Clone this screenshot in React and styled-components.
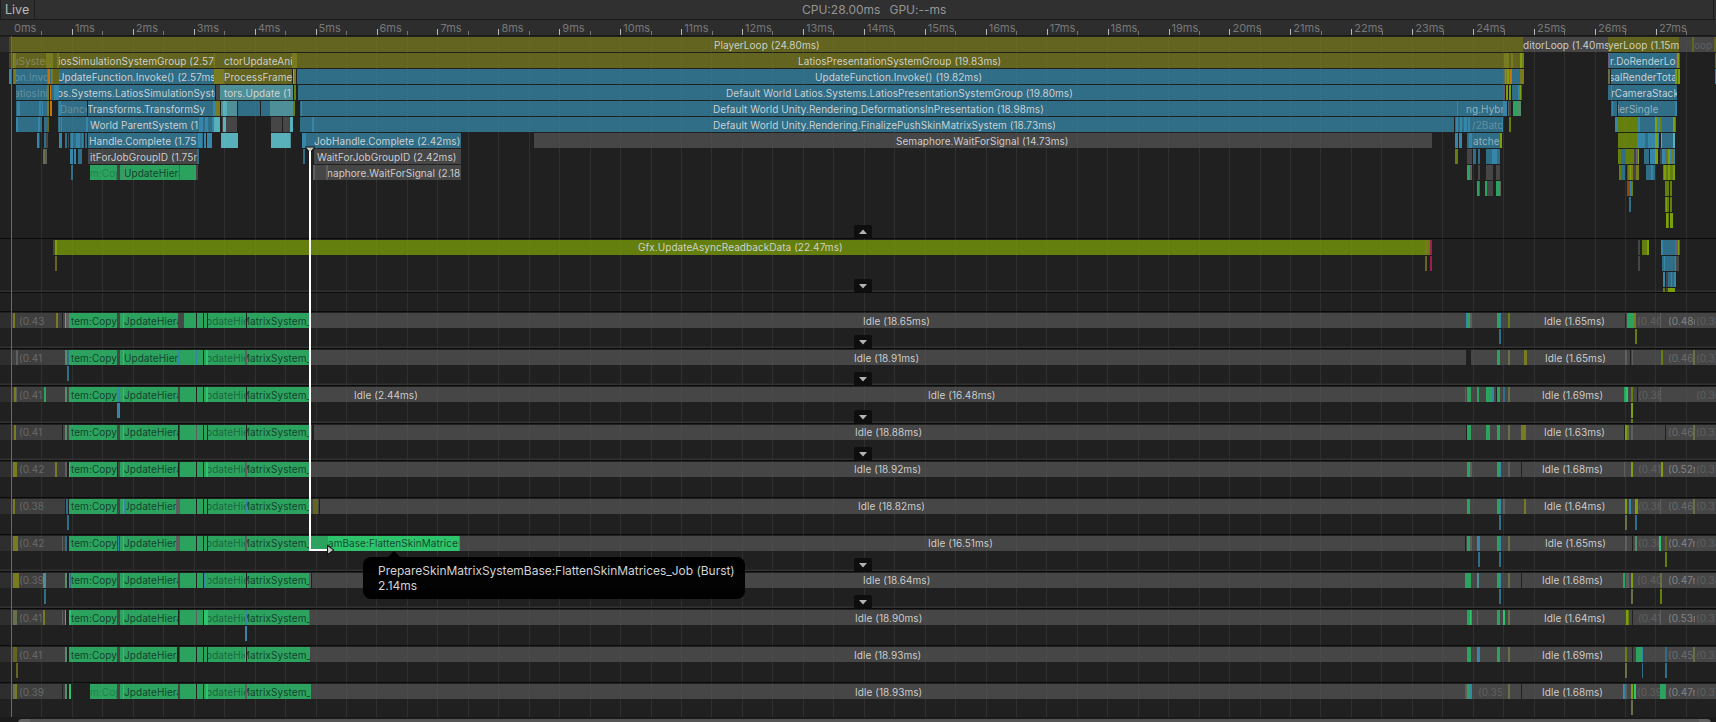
import React from "react";
import styled, { createGlobalStyle } from "styled-components";

const C = {
  o: "#62641f", O: "#787b1f", d: "#4a4b22", b: "#306d86", B: "#3586a8", t: "#4f8f97", T: "#58b1ba",
  g: "#464646", G: "#5e5e5e", h: "#2e2e2e", j: "#3f3f3f", n: "#2ca25f", N: "#2dc46c", M: "#558c6c",
  l: "#647f0e", L: "#7c9f0b", r: "#c8740c", R: "#93440f", p: "#6a5a7c", m: "#a01c4c", x: "#202020", q: "#66714a",
};
const INK = {
  w: "rgba(222,222,222,.9)", f: "rgba(200,210,210,.36)", s: "rgba(215,220,220,.62)",
  k: "rgba(12,40,28,.8)", z: "rgba(14,60,36,.6)", e: "rgba(14,60,36,.35)", v: "rgba(160,160,160,.3)",
  u: "rgba(175,175,175,.6)", y: "rgba(165,165,165,.42)",
};

const Page = createGlobalStyle`
  * { box-sizing: border-box; }
  body { margin: 0; background: #202020; overflow: hidden; }
`;
const Profiler = styled.main`
  position: relative;
  width: 1716px;
  height: 722px;
  overflow: hidden;
  display: flex;
  flex-direction: column;
  background: #202020;
  font-family: Inter, "Liberation Sans", sans-serif;
  font-size: 11px;
`;
const Toolbar = styled.header`
  display: grid;
  grid-template-columns: 35px 1fr 3px;
  height: 20px;
  flex: none;
  background: #303030;
  border-bottom: 1px solid #1b1b1b;
  font-size: 12px;
  line-height: 19px;
  color: #a8a8a8;
`;
const LiveButton = styled.div`
  border-left: 1px solid #1e1e1e;
  border-right: 1px solid #1e1e1e;
  padding-left: 4px;
  font-size: 12.5px;
  color: #b8b8b8;
`;
const Stats = styled.div`
  display: flex;
  gap: 9px;
  padding-left: 767px;
  color: #959595;
  white-space: pre;
`;
const ToolbarEnd = styled.div`
  border-left: 1px solid #1b1b1b;
`;
const Ruler = styled.div`
  display: flex;
  align-items: flex-end;
  flex: none;
  height: 16px;
  padding-left: 11px;
  background: #2d2d2d;
  border-bottom: 1px solid #191919;
  overflow: hidden;
`;
const Tick = styled.div`
  display: flex;
  flex: 0 0 60.93px;
  position: relative;
  height: 15px;
  padding-left: 3px;
  line-height: 17px;
  font-size: 11px;
  color: #777;
  &::before, &::after {
    content: "";
    position: absolute;
    bottom: 0;
    left: 0;
    width: 1px;
    height: 6px;
    background: ${(p) => (p.$first ? "transparent" : "#b8b8b8")};
  }
  &::after { left: 30.4px; height: 4px; background: #777; }
`;
const Tracks = styled.div`
  display: flex;
  flex-direction: column;
  position: relative;
  flex: none;
  overflow: hidden;
`;
const Grid = styled.div`
  position: absolute;
  inset: 0;
  display: flex;
  padding-left: 11px;
  z-index: ${(p) => (p.$front ? 2 : 0)};
  pointer-events: none;
`;
const GridLine = styled.div`
  flex: 0 0 30.466px;
  border-left: 1px solid ${(p) => (p.$front ? "rgba(255,255,255,.025)" : "rgba(255,255,255,.055)")};
  &:first-child { border-left-color: #6a6a6a; }
`;
const Track = styled.section`
  position: relative;
  flex: none;
  height: ${(p) => p.$h}px;
  padding-top: 1px;
  overflow: hidden;
  line-height: ${(p) => (p.$high ? 15 : 17)}px;
  border-bottom: 1px solid ${(p) => (p.$last ? "transparent" : "#0b0b0b")};
  box-shadow: ${(p) => (p.$more ? "inset 0 -1px #323232, inset 0 -2px #282828" : "none")};
`;
const Lane = styled.div`
  display: flex;
  height: 15px;
  margin-bottom: 1px;
  position: relative;
  z-index: 1;
`;
const Bar = styled.div`
  flex: none;
  width: ${(p) => p.$w}px;
  margin-left: ${(p) => p.$gap}px;
  background: ${(p) => C[p.$c]};
  overflow: hidden;
`;
const Label = styled.span`
  display: block;
  margin-left: ${(p) => p.$x}px;
  font-size: 10px;
  letter-spacing: .06px;
  white-space: pre;
  color: ${(p) => INK[p.$ink]};
`;
const Toggle = styled.button`
  position: absolute;
  z-index: 3;
  left: 854px;
  bottom: 0;
  width: 18px;
  height: 13px;
  padding: ${(p) => (p.$up ? 0 : 1)}px 0 0;
  border: 0;
  border-radius: 2px 2px 0 0;
  background: #0e0e0e;
  display: flex;
  align-items: center;
  justify-content: center;
`;
const Scroll = styled.div`
  flex: none;
  height: 5px;
  background: #1b1b1b;
  padding: 2px 5px 0 18px;
  overflow: hidden;
`;
const Thumb = styled.div`
  height: 8px;
  background: #555;
  border-radius: 4px;
  border: solid #626262;
  border-width: 0 12px;
`;
const Flow = styled.svg`
  position: absolute;
  z-index: 4;
  left: 300px;
  top: 140px;
`;
const Tooltip = styled.div`
  position: absolute;
  z-index: 5;
  left: 363px;
  top: 557px;
  width: 382px;
  height: 42px;
  padding: 6px 15px;
  border-radius: 8px;
  background: rgba(0, 0, 0, .96);
  color: #d2d2d2;
  font-size: 12px;
  letter-spacing: -.03px;
  line-height: 15px;
  white-space: pre;
  &::before {
    content: "";
    position: absolute;
    left: 25px;
    top: -6px;
    border: solid transparent;
    border-width: 0 6px 6px;
    border-bottom-color: #000;
  }
`;

// Bars are [start, end, colour, label, label start, label ink].
const mainLanes = [
  [[0, 9, "h"], [9, 11, "d"], [11, 1523, "o", "PlayerLoop (24.80ms)", 714, "w"], [1523, 1608, "g", "ditorLoop (1.40ms)", 1523, "w"], [1608, 1679, "o", "yerLoop (1.15ms", 1608, "w"], [1679, 1716, "g", "oop (", 1694, "v"], [1692, 1694, "o"], [1714, 1716, "o"]],
  [[9, 11, "d"], [11, 13, "o"], [13, 14, "t"], [14, 16, "O"], [16, 46, "o", "ıSyster", 16, "f"], [46, 53, "O"], [53, 57, "o"], [57, 60, "O"], [59, 215, "o", "iosSimulationSystemGroup (2.57ms)", 58, "w"], [214, 215, "O"], [215, 224, "o"], [224, 292, "o", "ctorUpdateAni", 224, "w"], [292, 297, "O"], [297, 1504, "o", "LatiosPresentationSystemGroup (19.83ms)", 798, "w"], [1504, 1509, "O"], [1509, 1511, "o"], [1511, 1513, "O"], [1513, 1520, "o"], [1520, 1522, "L"], [1522, 1524, "O"], [1608, 1609, "p"], [1609, 1610, "q"], [1610, 1676, "b", "r.DoRenderLo", 1610, "w"], [1676, 1677, "p"], [1677, 1679, "L"], [1679, 1680, "o"], [1715, 1716, "o"]],
  [[9, 11, "B"], [11, 13, "x"], [13, 14, "q"], [14, 16, "O"], [16, 47, "b", "on.Invo", 14, "f"], [47, 48, "O"], [48, 50, "r"], [50, 51, "b"], [51, 53, "O"], [53, 59, "o"], [59, 214, "b", "UpdateFunction.Invoke() (2.57ms", 57, "w"], [214, 224, "O"], [224, 292, "o", "ProcessFrame", 224, "w"], [293, 294, "T"], [294, 296, "O"], [297, 1504, "b", "UpdateFunction.Invoke() (19.82ms)", 815, "w"], [1504, 1505, "q"], [1505, 1506, "L"], [1506, 1507, "O"], [1507, 1509, "L"], [1509, 1510, "O"], [1510, 1512, "r"], [1512, 1520, "b"], [1520, 1524, "O"], [1608, 1610, "q"], [1611, 1675, "b", "salRenderTota", 1609, "w"], [1675, 1677, "L"], [1677, 1678, "o"], [1678, 1680, "L"], [1715, 1716, "B"]],
  [[16, 47, "b", "atiosInit", 14, "f"], [47, 49, "O"], [50, 51, "r"], [51, 54, "b"], [54, 59, "B"], [59, 215, "b", "os.Systems.LatiosSimulationSyste", 57, "w"], [216, 220, "g"], [220, 293, "t", "tors.Update (1", 224, "w"], [294, 296, "l"], [298, 1504, "b", "Default World Latios.Systems.LatiosPresentationSystemGroup (19.80ms)", 726, "w"], [1504, 1505, "p"], [1506, 1508, "L"], [1509, 1511, "L"], [1512, 1518, "b"], [1518, 1520, "B"], [1520, 1521, "L"], [1521, 1522, "o"], [1608, 1677, "b", "rCameraStack", 1611, "w"], [1611, 1612, "B"]],
  [[16, 47, "b"], [17, 20, "B"], [39, 41, "B"], [42, 43, "B"], [47, 49, "O"], [50, 52, "r"], [58, 87, "b", "Dance", 60, "f"], [59, 61, "B"], [88, 215, "b", "Transforms.TransformSy", 87, "w"], [213, 215, "B"], [215, 220, "O"], [221, 223, "t"], [223, 227, "T"], [227, 237, "t"], [238, 260, "b"], [261, 270, "b"], [270, 293, "t"], [293, 295, "l"], [300, 1467, "b", "Default World Unity.Rendering.DeformationsInPresentation (18.98ms)", 713, "w"], [301, 302, "B"], [1457, 1458, "B"], [1466, 1503, "b", "ng.Hybr", 1466, "s"], [1503, 1507, "B"], [1508, 1509, "G"], [1509, 1511, "g"], [1513, 1517, "n"], [1517, 1521, "M"], [1611, 1617, "b"], [1612, 1613, "B"], [1618, 1677, "b", "derSingle", 1613, "s"], [1675, 1677, "B"]],
  [[16, 42, "b"], [16, 18, "B"], [38, 40, "B"], [44, 47, "b"], [47, 49, "o"], [58, 87, "b"], [59, 60, "B"], [61, 62, "B"], [86, 88, "B"], [88, 199, "b", "World ParentSystem (1", 90, "w"], [199, 203, "B"], [203, 205, "b"], [205, 208, "B"], [208, 212, "b"], [212, 214, "B"], [214, 220, "T"], [222, 223, "g"], [223, 226, "T"], [226, 237, "g"], [271, 282, "g"], [283, 290, "g"], [290, 293, "T"], [300, 1454, "b", "Default World Unity.Rendering.FinalizePushSkinMatrixSystem (18.73ms)", 713, "w"], [312, 314, "B"], [1455, 1503, "b", "/2Batc", 1472, "f"], [1456, 1458, "B"], [1460, 1462, "B"], [1464, 1467, "B"], [1468, 1470, "B"], [1502, 1503, "B"], [1509, 1511, "l"], [1615, 1618, "B"], [1618, 1638, "l"], [1638, 1655, "b"], [1638, 1640, "B"], [1655, 1657, "L"], [1657, 1660, "B"], [1660, 1662, "l"], [1662, 1673, "b"], [1673, 1675, "L"], [1675, 1676, "q"]],
  [[37, 39, "B"], [39, 40, "g"], [44, 46, "b"], [46, 48, "g"], [59, 62, "B"], [65, 67, "b"], [68, 69, "g"], [70, 76, "b"], [71, 73, "B"], [76, 80, "B"], [80, 84, "b"], [82, 83, "B"], [85, 87, "b"], [88, 198, "b", "Handle.Complete (1.75", 89, "w"], [198, 202, "B"], [202, 203, "b"], [204, 206, "B"], [207, 212, "B"], [221, 238, "T"], [271, 291, "T"], [290, 291, "t"], [302, 306, "B"], [306, 461, "b", "JobHandle.Complete (2.42ms)", 314, "w"], [534, 1432, "g", "Semaphore.WaitForSignal (14.73ms)", 896, "w"], [1455, 1458, "B"], [1459, 1462, "B"], [1467, 1500, "b", "atche", 1473, "s"], [1469, 1472, "B"], [1500, 1502, "L"], [1618, 1637, "l"], [1637, 1645, "B"], [1645, 1648, "b"], [1648, 1655, "B"], [1655, 1658, "L"], [1658, 1659, "B"], [1661, 1675, "b"], [1661, 1662, "T"], [1673, 1675, "T"]],
  [[43, 45, "q"], [45, 47, "G"], [70, 73, "B"], [74, 76, "B"], [78, 82, "b"], [88, 198, "g", "itForJobGroupID (1.75r", 90, "w"], [197, 199, "b"], [303, 305, "b"], [314, 461, "g", "WaitForJobGroupID (2.42ms)", 317, "w"], [1455, 1458, "l"], [1467, 1472, "g"], [1473, 1476, "b"], [1478, 1480, "b"], [1486, 1500, "b"], [1492, 1497, "B"], [1618, 1621, "l"], [1621, 1626, "b"], [1626, 1634, "l"], [1634, 1636, "g"], [1636, 1639, "p"], [1638, 1639, "L"], [1644, 1649, "b"], [1650, 1655, "B"], [1655, 1658, "L"], [1660, 1662, "g"], [1662, 1665, "B"], [1665, 1668, "q"], [1668, 1670, "L"], [1670, 1672, "B"], [1672, 1673, "O"], [1673, 1675, "B"]],
  [[71, 73, "b"], [90, 117, "n", "m:Cop", 90, "e"], [117, 120, "g"], [120, 179, "n", "UpdateHiera", 124, "k"], [123, 125, "M"], [179, 180, "G"], [180, 196, "n"], [196, 198, "g"], [313, 461, "g", "naphore.WaitForSignal (2.18", 327, "w"], [313, 315, "G"], [326, 328, "G"], [1467, 1470, "n"], [1470, 1472, "G"], [1478, 1480, "g"], [1486, 1493, "g"], [1496, 1500, "g"], [1619, 1621, "l"], [1621, 1625, "b"], [1627, 1628, "R"], [1628, 1633, "O"], [1630, 1631, "L"], [1633, 1636, "g"], [1636, 1639, "O"], [1646, 1655, "b"], [1651, 1653, "B"], [1663, 1675, "l"], [1664, 1666, "L"], [1668, 1670, "L"], [1673, 1675, "L"]],
  [[1477, 1479, "n"], [1479, 1480, "G"], [1485, 1487, "n"], [1487, 1493, "g"], [1496, 1500, "n"], [1500, 1501, "G"], [1627, 1630, "R"], [1630, 1631, "B"], [1631, 1633, "l"], [1665, 1669, "l"], [1670, 1672, "l"]],
  [[1629, 1631, "b"], [1665, 1669, "l"], [1666, 1667, "L"], [1670, 1672, "l"]],
  [[1666, 1669, "L"], [1668, 1669, "l"], [1670, 1673, "L"]],
];
const renderLanes = [
  [[53, 55, "d"], [55, 57, "L"], [57, 1432, "l", "Gfx.UpdateAsyncReadbackData (22.47ms)", 638, "w"], [1425, 1427, "O"], [1430, 1432, "m"], [1638, 1640, "g"], [1642, 1648, "l"], [1647, 1649, "L"], [1661, 1663, "B"], [1663, 1675, "b"], [1675, 1676, "q"], [1676, 1678, "p"], [1678, 1679, "L"], [1679, 1680, "o"]],
  [[55, 57, "o"], [1425, 1427, "o"], [1430, 1432, "m"], [1638, 1640, "g"], [1662, 1675, "b"], [1664, 1665, "B"], [1675, 1676, "B"], [1676, 1679, "g"]],
  [[1663, 1665, "B"], [1666, 1668, "g"], [1668, 1676, "b"], [1671, 1672, "B"], [1674, 1676, "B"]],
  [[1663, 1665, "l"], [1666, 1668, "g"], [1668, 1675, "L"]],
];

// The job bars every worker shares before its long idle stretch.
const jobs = (hier, gap) => [
  [69, 117, "n", "tem:Copy", 71, "k"], [117, 120, "g"], [120, 178, "n", hier + "pdateHiera", 124, "k"], [123, 124, "N"], [178, gap, "g"],
  [gap, 196, "n"], [196, 197, "x"], [197, 203, "n"], [203, 204, "x"], [204, 207, "n"], [207, 208, "x"],
  [208, 246, "n", "pdateHie", 206, "z"], [246, 247, "x"], [247, 310, "n", "MatrixSystem_", 241, "k"],
];
const head = (v) => [[0, 11, "h"], [11, 65, "j", `(0.${v}`, 19, "y"]];
const idle = (v, x, from = 310) => [[from, 1716, "g", `Idle (${v}ms)`, x, "w"]];
const tail = (v, x, a, ax, b, c) => [
  [1533, 1623, "g", `Idle (${v}ms)`, x, "w"],
  [1636, 1661, "g", a && `(0.${a}`, ax, "v"],
  [1663, 1695, "g", b && `(0.${b}`, 1668, b && b.length > 2 ? "u" : "y"],
  [1696, 1716, "g", `(0.${c}`, 1696, "v"],
];

const workers = [
  { h: 37, more: 1, a: [...head("43"), [13, 15, "O"], [56, 58, "O"], [62, 63, "x"], [63, 65, "g"], [65, 66, "N"], [66, 69, "G"], ...jobs("J", 184), ...idle("18.65", 863), [1466, 1467, "B"], [1467, 1470, "n"], [1470, 1472, "G"], [1497, 1500, "n"], [1500, 1501, "B"], [1508, 1510, "l"], ...tail("1.65", 1544, "40", 1637, "48r", "38"), [1625, 1626, "x"], [1627, 1634, "n"], [1634, 1636, "O"], [1660, 1661, "G"]], b: [[1499, 1501, "b"], [1635, 1637, "l"]] },
  { h: 37, more: 1, a: [...head("41"), [16, 18, "G"], [65, 67, "M"], [67, 69, "b"], ...jobs("U", 180), [178, 180, "B"], [196, 197, "B"], [206, 208, "N"], [245, 247, "G"], ...idle("18.91", 854), [1466, 1471, "x"], [1497, 1500, "n"], [1508, 1510, "q"], [1524, 1527, "O"], ...tail("1.65", 1545, "", 0, "46", "37"), [1625, 1627, "G"], [1630, 1631, "x"], [1632, 1633, "G"], [1661, 1663, "l"], [1693, 1695, "q"]], b: [[67, 69, "b"]] },
  { h: 38, more: 1, a: [...head("41"), [14, 16, "O"], [16, 17, "G"], [44, 46, "n"], [65, 67, "M"], [67, 69, "g"], ...jobs("J", 180), [117, 120, "B"], [206, 208, "N"], [310, 312, "b"], [311, 850, "g", "Idle (2.44ms)", 354, "w"], ...idle("16.48", 928, 850), [1465, 1466, "G"], [1467, 1471, "n"], [1477, 1479, "n"], [1486, 1492, "n"], [1492, 1494, "B"], [1496, 1497, "x"], [1497, 1500, "n"], [1503, 1505, "b"], [1508, 1510, "q"], ...tail("1.69", 1542, "38", 1638, "", "36"), [1624, 1626, "n"], [1626, 1628, "N"], [1631, 1633, "l"], [1637, 1638, "x"], [1660, 1661, "G"]], b: [[117, 120, "B"], [1631, 1633, "L"]], c: [[1631, 1633, "l"]] },
  { h: 37, more: 1, high: 1, a: [...head("41"), [14, 16, "O"], [62, 63, "x"], [63, 69, "g"], [65, 67, "M"], ...jobs("J", 180), [178, 179, "x"], [196, 197, "G"], ...idle("18.88", 855), [312, 314, "x"], [1466, 1467, "x"], [1467, 1471, "n"], [1486, 1490, "n"], [1497, 1499, "n"], [1499, 1500, "M"], [1508, 1510, "q"], [1521, 1526, "O"], ...tail("1.63", 1544, "", 0, "46", "37"), [1624, 1625, "x"], [1625, 1627, "L"], [1627, 1629, "q"], [1631, 1633, "G"], [1665, 1666, "x"], [1693, 1695, "q"]] },
  { h: 37, high: 1, a: [...head("42"), [13, 17, "O"], [55, 57, "O"], [65, 67, "G"], ...jobs("J", 180), [69, 70, "N"], [117, 118, "x"], [178, 179, "x"], [206, 208, "N"], [245, 247, "G"], ...idle("18.92", 854), [1467, 1470, "n"], [1470, 1472, "G"], [1497, 1500, "n"], [1500, 1501, "B"], [1508, 1510, "G"], [1521, 1522, "x"], ...tail("1.68", 1542, "41", 1638, "52r", "37"), [1624, 1625, "G"], [1631, 1633, "L"], [1661, 1663, "L"]] },
  { h: 37, high: 1, a: [...head("38"), [13, 15, "O"], [66, 68, "b"], ...jobs("J", 180), [124, 126, "B"], [176, 180, "G"], [246, 247, "B"], ...idle("18.82", 858), [313, 318, "o"], [319, 320, "x"], [1467, 1470, "n"], [1497, 1500, "n"], [1500, 1501, "B"], [1503, 1505, "G"], [1524, 1526, "O"], ...tail("1.64", 1544, "38", 1638, "46", "37"), [1625, 1627, "L"], [1629, 1631, "B"], [1635, 1638, "L"], [1660, 1661, "G"], [1693, 1695, "q"]], b: [[67, 69, "b"], [1499, 1501, "b"], [1625, 1627, "q"], [1635, 1637, "b"]] },
  { h: 37, more: 1, high: 1, a: [...head("42"), [13, 18, "O"], [62, 63, "G"], [65, 67, "b"], ...jobs("J", 180), [118, 119, "B"], [176, 180, "G"], [245, 247, "G"], [310, 328, "n"], [328, 459, "N", "amBase:FlattenSkinMatrices", 328, "k"], [459, 460, "M"], ...idle("16.51", 928, 460), [1465, 1466, "x"], [1467, 1470, "n"], [1470, 1472, "G"], [1477, 1478, "n"], [1478, 1480, "B"], [1497, 1499, "n"], [1499, 1501, "B"], [1508, 1510, "q"], ...tail("1.65", 1545, "38", 1638, "47r", "38"), [1625, 1627, "G"], [1632, 1633, "x"], [1635, 1637, "M"], [1659, 1661, "N"], [1665, 1667, "o"]], b: [[1478, 1480, "b"], [1499, 1501, "b"], [1665, 1667, "l"]] },
  { h: 37, more: 1, high: 1, a: [...head("39"), [13, 19, "O"], [43, 46, "t"], [65, 67, "M"], ...jobs("J", 180), [70, 71, "b"], [204, 205, "B"], [207, 208, "B"], [309, 311, "G"], ...idle("18.64", 863, 311), [311, 312, "x"], [1465, 1471, "n"], [1477, 1479, "t"], [1497, 1500, "n"], [1500, 1501, "B"], [1508, 1510, "q"], [1521, 1522, "x"], ...tail("1.68", 1542, "40", 1637, "47r", "38"), [1623, 1625, "n"], [1626, 1629, "G"], [1631, 1633, "L"], [1660, 1662, "q"]], b: [[44, 46, "b"], [1499, 1501, "b"], [1631, 1633, "q"], [1660, 1662, "l"]] },
  { h: 37, a: [...head("41"), [13, 17, "q"], [43, 45, "O"], [62, 63, "G"], [65, 66, "N"], ...jobs("J", 180), [69, 71, "N"], [178, 179, "x"], [196, 197, "G"], [204, 208, "N"], [245, 247, "B"], [309, 310, "G"], ...idle("18.90", 855), [1467, 1472, "n"], [1470, 1471, "N"], [1477, 1478, "G"], [1497, 1500, "n"], [1503, 1505, "N"], [1508, 1510, "q"], ...tail("1.64", 1544, "41", 1638, "53r", "37"), [1626, 1628, "L"], [1628, 1629, "l"], [1632, 1633, "x"], [1660, 1661, "G"]], b: [[245, 247, "B"]] },
  { h: 37, a: [...head("41"), [13, 17, "o"], [65, 67, "M"], ...jobs("J", 180), [177, 179, "x"], [245, 246, "N"], ...idle("18.93", 854), [1467, 1471, "n"], [1477, 1478, "n"], [1478, 1480, "B"], [1497, 1500, "n"], [1508, 1510, "q"], ...tail("1.69", 1542, "", 0, "45", "37"), [1625, 1627, "l"], [1632, 1633, "x"], [1636, 1642, "n"], [1642, 1643, "B"], [1665, 1667, "b"], [1693, 1695, "q"]], b: [[16, 18, "o"], [1625, 1627, "q"], [1642, 1643, "b"], [1665, 1667, "b"]] },
  { h: 34, last: 1, a: [...head("39"), [13, 15, "q"], [15, 17, "O"], [62, 63, "x"], [65, 67, "M"], ...jobs("J", 180).slice(1), [69, 71, "N"], [71, 90, "x"], [90, 117, "n", "m:Cop", 90, "e"], [206, 208, "N"], [245, 247, "G"], ...idle("18.93", 855, 311), [310, 311, "n"], [1465, 1467, "G"], [1467, 1470, "n"], [1470, 1472, "B"], [1474, 1502, "g", "(0.35", 1478, "v"], [1508, 1510, "q"], [1521, 1522, "x"], ...tail("1.68", 1542, "39", 1637, "47r", "37"), [1623, 1624, "n"], [1624, 1625, "B"], [1625, 1627, "G"], [1631, 1633, "L"], [1634, 1636, "N"], [1660, 1665, "n"], [1665, 1666, "B"]], b: [[1631, 1633, "q"]] },
];

function BarLane({ bars }) {
  let end = 0;
  return (
    <Lane>
      {bars.map(([x0, x1, c, text, tx, ink], i) => {
        const gap = x0 - end;
        end = x1;
        return (
          <Bar key={i} $w={x1 - x0} $gap={gap} $c={c}>
            {text && <Label $x={tx - x0} $ink={ink}>{text}</Label>}
          </Bar>
        );
      })}
    </Lane>
  );
}

function Expander({ up }) {
  return (
    <Toggle $up={up}>
      <svg width="8" height="5" viewBox="0 0 8 5"><path d={up ? "M0 5 4 .5 8 5Z" : "M0 0 4 4.5 8 0Z"} fill="#b4b4b4" /></svg>
    </Toggle>
  );
}

const gridLines = Array.from({ length: 56 }, (_, i) => i);

export default function App() {
  return (
    <Profiler>
      <Page />
      <Toolbar>
        <LiveButton>Live</LiveButton>
        <Stats><span>CPU:28.00ms</span><span>GPU:--ms</span></Stats>
        <ToolbarEnd />
      </Toolbar>
      <Ruler>
        {Array.from({ length: 28 }, (_, i) => <Tick key={i} $first={i === 0}>{i}ms</Tick>)}
      </Ruler>
      <Tracks>
        <Grid>{gridLines.map((i) => <GridLine key={i} />)}</Grid>
        <Grid $front>{gridLines.map((i) => <GridLine key={i} $front />)}</Grid>
        <Track $h={203}>
          {mainLanes.map((bars, i) => <BarLane key={i} bars={bars} />)}
          <Expander up />
        </Track>
        <Track $h={54} $more $high>
          {renderLanes.map((bars, i) => <BarLane key={i} bars={bars} />)}
          <Expander />
        </Track>
        <Track $h={19} />
        {workers.map((w, i) => (
          <Track key={i} $h={w.h} $more={w.more} $last={w.last} $high={w.high}>
            <BarLane bars={w.a} />
            {w.b && <BarLane bars={w.b} />}
            {w.c && <BarLane bars={w.c} />}
            {w.more && <Expander />}
          </Track>
        ))}
      </Tracks>
      <Scroll><Thumb /></Scroll>
      <Flow width="40" height="420" viewBox="0 0 40 420">
        <path d="M5 6.5H15L13 10.5 11.5 12H8.5L7 10.5Z" fill="#111" />
        <path d="M10 10V410H28" fill="none" stroke="#fff" strokeWidth="2" />
        <path d="M6 7.5H14L11 11H9Z" fill="#c4c4c4" />
        <path d="M27 404.500L34.500 410 27 415.500Z" fill="#111" />
        <path d="M28 406.500L33 410 28 413.500Z" fill="#c4c4c4" />
      </Flow>
      <Tooltip>{"PrepareSkinMatrixSystemBase:FlattenSkinMatrices_Job (Burst)\n2.14ms"}</Tooltip>
    </Profiler>
  );
}
